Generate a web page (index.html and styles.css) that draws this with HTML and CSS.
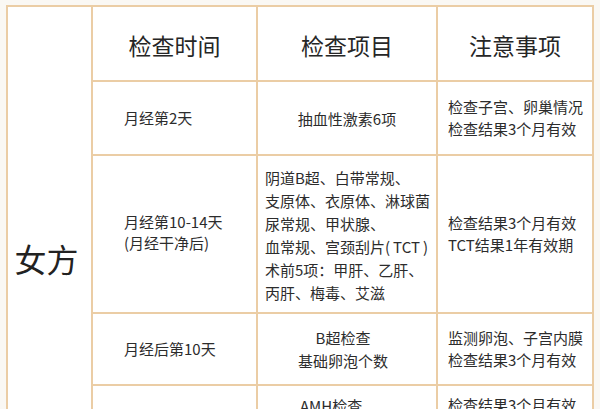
FILE: index.html
```html
<!DOCTYPE html>
<html lang="zh-CN">
<head>
<meta charset="utf-8">
<title>女方检查</title>
<link rel="stylesheet" href="styles.css">
</head>
<body>
<div class="sheet">
  <div class="side">女方</div>

  <div class="cell head">检查时间</div>
  <div class="cell head">检查项目</div>
  <div class="cell head">注意事项</div>

  <div class="cell time">月经第2天</div>
  <div class="cell item">抽血性激素6项</div>
  <div class="cell note">检查子宫、卵巢情况<br>检查结果3个月有效</div>

  <div class="cell time tight">月经第10-14天<br>(月经干净后)</div>
  <div class="cell item list">阴道B超、白带常规、<br>支原体、衣原体、淋球菌<br>尿常规、甲状腺、<br>血常规、宫颈刮片(&thinsp;TCT&thinsp;)<br>术前5项：甲肝、乙肝、<br>丙肝、梅毒、艾滋</div>
  <div class="cell note">检查结果3个月有效<br>TCT结果1年有效期</div>

  <div class="cell time">月经后第10天</div>
  <div class="cell item shift">B超检查<br>基础卵泡个数</div>
  <div class="cell note">监测卵泡、子宫内膜<br>检查结果3个月有效</div>

  <div class="cell time top"></div>
  <div class="cell item top amh">AMH检查</div>
  <div class="cell note top">检查结果3个月有效</div>

  <div class="cell time"></div>
  <div class="cell item"></div>
  <div class="cell note"></div>
</div>
</body>
</html>
```

FILE: styles.css
```css
html, body {
  margin: 0;
  padding: 0;
}
body {
  width: 600px;
  height: 409px;
  overflow: hidden;
  background: #faf8f4;
  font-family: "Noto Sans CJK SC", "Noto Sans", sans-serif;
  color: #2c2c2c;
}
.sheet {
  margin: 5px 0 0 6px;
  width: max-content;
  display: grid;
  grid-template-columns: 83px 163px 178px 154px;
  grid-template-rows: 73px 72px 156px 70px 70px 50px;
  gap: 2px;
  padding: 2px;
  background: #ebcda5;
}
.side {
  grid-row: 1 / -1;
  grid-column: 1;
  background: #fff;
  display: flex;
  align-items: center;
  justify-content: center;
  padding-right: 6px;
  font-size: 32px;
  color: #222;
}
.cell {
  background: #fff;
  display: flex;
  flex-direction: column;
  justify-content: center;
  font-size: 15px;
  line-height: 22px;
}
.head {
  align-items: center;
  font-size: 23px;
  line-height: 30px;
  color: #262626;
  padding-top: 2px;
}
.time {
  padding-left: 31px;
}
.tight {
  line-height: 21px;
  padding-bottom: 4px;
}
.item {
  align-items: center;
  text-align: center;
  line-height: 23px;
}
.item.shift {
  padding-right: 8px;
}
.item.list {
  align-items: flex-start;
  text-align: left;
  padding-left: 7px;
  padding-top: 2px;
}
.note {
  padding-left: 10px;
}
.top {
  justify-content: flex-start;
  padding-top: 8px;
}
.item.amh {
  align-items: flex-start;
  padding-left: 42px;
}
```
